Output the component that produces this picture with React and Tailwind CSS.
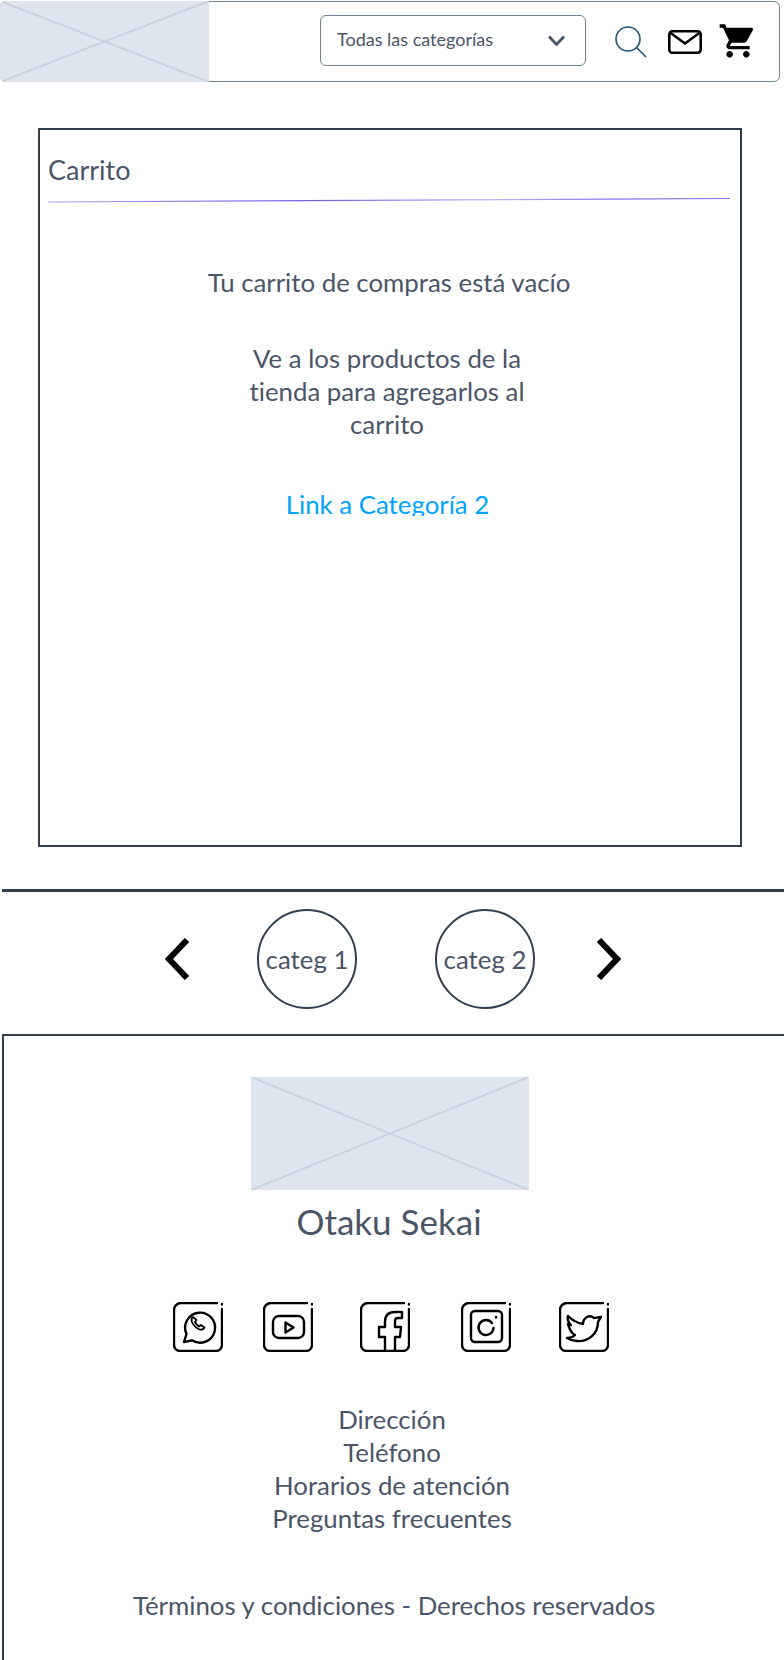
import { MdShoppingCart } from 'react-icons/md';

function Placeholder({ className }) {
  return (
    <div className={`relative bg-[#dfe5ee] overflow-hidden ${className}`}>
      <svg className="absolute inset-0 w-full h-full" preserveAspectRatio="none" viewBox="0 0 100 100">
        <line x1="0" y1="0" x2="100" y2="100" stroke="#c8d1de" strokeWidth="2" vectorEffect="non-scaling-stroke" />
        <line x1="100" y1="0" x2="0" y2="100" stroke="#c8d1de" strokeWidth="2" vectorEffect="non-scaling-stroke" />
      </svg>
    </div>
  );
}

function SocialFrame({ children, className }) {
  return (
    <svg className={`w-[50px] h-[50px] ${className}`} viewBox="0 0 50 50" fill="none" stroke="#000" strokeWidth="2.4" strokeLinecap="round" strokeLinejoin="round">
      <path d="M44 1H8a7 7 0 0 0-7 7v35a6 6 0 0 0 6 6h36a6 6 0 0 0 6-6V7" />
      <path d="M49 2v.5" />
      {children}
    </svg>
  );
}

export default function App() {
  return (
    <div className="w-[784px] h-[1660px] overflow-hidden bg-white font-['Lato','Carlito','Open_Sans',sans-serif] text-[#4a5568] [font-variant-ligatures:none]">
      <header className="mt-px w-[780px] h-[81px] border border-[#718096] rounded-md flex items-center">
        <Placeholder className="-ml-px w-[209px] h-[81px] shrink-0 rounded-l-md" />
        <div className="ml-[111px] mb-[2px] w-[266px] h-[51px] border border-[#718096] rounded-md flex items-center justify-between pl-4 pr-5 text-lg">
          <span className="pb-1">Todas las categorías</span>
          <svg className="w-[17px] h-[11px]" viewBox="0 0 17 11" fill="none" stroke="#4a5568" strokeWidth="2.8">
            <path d="M1 1.5l7.5 8 7.5-8" />
          </svg>
        </div>
        <svg className="ml-[29px] w-[32px] h-[32px] shrink-0" viewBox="0 0 32 32" fill="none" stroke="#1f5373" strokeWidth="1.6">
          <circle cx="13" cy="13" r="12" />
          <path d="M21.5 21.5L31 31" />
        </svg>
        <svg className="ml-[21px] w-[34px] h-[24px] shrink-0" viewBox="0 0 34 24" fill="none" stroke="#000" strokeWidth="2.6" strokeLinejoin="round">
          <rect x="1.3" y="1.3" width="31.4" height="21.4" rx="3" />
          <path d="M2 2.5l15 11 15-11" />
        </svg>
        <MdShoppingCart className="ml-[16px] mb-[2px] w-[40px] h-[40px] shrink-0 text-black" />
      </header>

      <main className="mt-[46px] ml-[38px] w-[704px] h-[719px] border-2 border-[#333e4e] pt-[22px] pl-2 pr-[10px]">
        <h1 className="text-[27px] leading-[35px]">Carrito</h1>
        <svg className="block w-[682px] h-[7px] mt-[10px]" viewBox="0 0 682 7" fill="none">
          <defs>
            <linearGradient id="rule" x1="0" x2="682" y1="0" y2="0" gradientUnits="userSpaceOnUse">
              <stop offset="0" stopColor="#b79cf5" />
              <stop offset="0.4" stopColor="#7c5ce8" />
              <stop offset="0.65" stopColor="#c4b5f8" />
              <stop offset="0.85" stopColor="#7c5ce8" />
              <stop offset="1" stopColor="#8b6ff0" />
            </linearGradient>
          </defs>
          <line x1="0" y1="5" x2="682" y2="1.5" stroke="url(#rule)" strokeWidth="1.2" />
        </svg>
        <div className="flex flex-col items-center text-[25.8px] leading-[33px] text-center -mx-[10px]">
          <p className="mt-[62px]">Tu carrito de compras está vacío</p>
          <p className="mt-[43px] mr-1 w-[290px]">Ve a los productos de la tienda para agregarlos al carrito</p>
          <a className="mt-[47px] mr-[3px] h-[28px] overflow-hidden text-[#00a3ff]">Link a Categoría 2</a>
        </div>
      </main>

      <div className="mt-[42px] ml-[2px] h-[3px] bg-[#333e4e]" />

      <nav className="h-[142px] pb-2 flex items-center text-[25.8px]">
        <svg className="ml-[165px] w-[25px] h-[42px]" viewBox="0 0 25 42" fill="none" stroke="#000" strokeWidth="6">
          <path d="M22 2L4 21l18 19" />
        </svg>
        <div className="ml-[67px] w-[100px] h-[100px] rounded-full border-2 border-[#333e4e] flex items-center justify-center">categ 1</div>
        <div className="ml-[78px] w-[100px] h-[100px] rounded-full border-2 border-[#333e4e] flex items-center justify-center">categ 2</div>
        <svg className="ml-[61px] w-[25px] h-[42px]" viewBox="0 0 25 42" fill="none" stroke="#000" strokeWidth="6">
          <path d="M3 2l18 19L3 40" />
        </svg>
      </nav>

      <footer className="ml-[2px] h-[640px] border-t-2 border-l-2 border-[#333e4e] flex flex-col items-center text-[25.8px] leading-[33px]">
        <Placeholder className="mt-[41px] mr-2 w-[278px] h-[113px] shrink-0" />
        <p className="mt-[11px] mr-[10px] text-[35px] leading-[40px]">Otaku Sekai</p>
        <div className="mt-[61px] w-full h-[50px] flex">
          <SocialFrame className="ml-[169px]">
            <path d="M11 40l2.5-8A15 15 0 1 1 19 38.3z" />
            <path d="M20 15c-1.5 1-2 2.5-1 5 1.500 3.500 4 6 7.500 7.500 2.500.8 4-.2 5-2l-3.500-2.500-2 1.500c-1.800-1-3-2.500-4-4.500l1.500-2z" strokeWidth="1.8" />
          </SocialFrame>
          <SocialFrame className="ml-[40px]">
            <rect x="10" y="14" width="31" height="22" rx="6" />
            <path d="M22.5 20.5v10l8-5z" />
          </SocialFrame>
          <SocialFrame className="ml-[47px]">
            <path d="M35 49V35h5l1-10h-6v-6c0-2 1-3 3-3h4V10h-7c-6 0-10 3-10 10v5h-6v10h6v14" />
          </SocialFrame>
          <SocialFrame className="ml-[51px]">
            <rect x="10" y="9" width="31" height="31" rx="4" />
            <path d="M31 21a7.5 7.5 0 1 0 1.5 5" />
            <path d="M35 15v.5" />
          </SocialFrame>
          <SocialFrame className="ml-[48px]">
            <path d="M9 14c5 5 9 7 15 8 0-6 6-10 11-6 2 0 4-1 7-1l-3 5c0 12-10 20-21 19-4 0-7-1-10-3 4 0 6-1 8-3-4-2-6-7-7-11l3 1c-3-3-4-6-3-9z" />
          </SocialFrame>
        </div>
        <ul className="mt-[51px] mr-1 text-center">
          <li>Dirección</li>
          <li>Teléfono</li>
          <li>Horarios de atención</li>
          <li>Preguntas frecuentes</li>
        </ul>
        <p className="mt-[54px]">Términos y condiciones - Derechos reservados</p>
      </footer>
    </div>
  );
}
